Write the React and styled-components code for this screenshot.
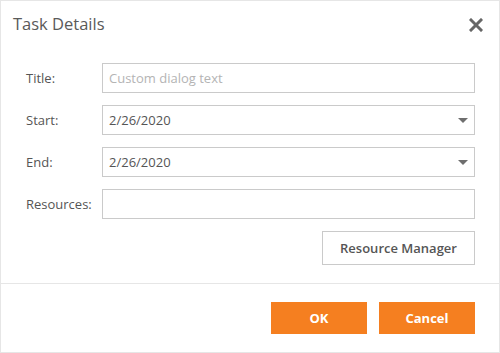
import React from "react";
import styled, { createGlobalStyle } from "styled-components";

const Global = createGlobalStyle`
  html, body { margin: 0; padding: 0; background: #fff; }
  body { font-family: "Open Sans", "Noto Sans", sans-serif; }
  * { box-sizing: border-box; }
`;

const Dialog = styled.div`
  width: 500px;
  height: 353px;
  border: 1px solid #e6e6e6;
  background: #fff;
  display: flex;
  flex-direction: column;
  color: #555;
`;

const Header = styled.div`
  height: 47px;
  display: flex;
  align-items: center;
  justify-content: space-between;
  padding: 0 16px 0 12px;
`;

const Title = styled.h1`
  margin: 0;
  font-size: 16.5px;
  font-weight: 400;
  color: #5a5a5a;
  line-height: 1;
`;

const CloseButton = styled.button`
  border: 0;
  background: transparent;
  padding: 0;
  width: 14px;
  height: 14px;
  display: flex;
  cursor: pointer;
`;

const Body = styled.div`
  flex: 1;
  padding: 15px 24px 18px 25px;
  display: flex;
  flex-direction: column;
  gap: 12px;
  border-bottom: 1px solid #e6e6e6;
`;

const Row = styled.div`
  display: flex;
  align-items: center;
`;

const Label = styled.label`
  width: 76px;
  font-size: 13px;
  color: #555;
`;

const Field = styled.div`
  flex: 1;
  height: 30px;
  border: 1px solid #cacaca;
  display: flex;
  align-items: center;
  padding: 0 6px;
  font-size: 13px;
  color: ${(p) => (p.$placeholder ? "#b4b4b4" : "#555")};
  position: relative;
`;

const Caret = styled.span`
  position: absolute;
  right: 6px;
  top: 12px;
  width: 0;
  height: 0;
  border-left: 5.5px solid transparent;
  border-right: 5.5px solid transparent;
  border-top: 5px solid #6e6e6e;
`;

const Actions = styled.div`
  display: flex;
  justify-content: flex-end;
`;

const OutlineButton = styled.button`
  height: 34px;
  width: 153px;
  border: 1px solid #cacaca;
  background: #fff;
  font-family: inherit;
  font-size: 13px;
  font-weight: 600;
  color: #555;
  padding: 0;
`;

const Footer = styled.div`
  height: 68px;
  display: flex;
  justify-content: flex-end;
  align-items: center;
  gap: 12px;
  padding: 0 24px 0 0;
`;

const PrimaryButton = styled.button`
  width: 96px;
  height: 32px;
  border: 0;
  background: #f57f20;
  color: #fff;
  font-family: inherit;
  font-size: 13px;
  font-weight: 700;
  padding: 0;
`;

export default function App() {
  return (
    <>
      <Global />
      <Dialog>
        <Header>
          <Title>Task Details</Title>
          <CloseButton aria-label="Close">
            <svg width="14" height="14" viewBox="0 0 14 14">
              <path d="M2 2 L12 12 M12 2 L2 12" stroke="#666" strokeWidth="3" strokeLinecap="square" />
            </svg>
          </CloseButton>
        </Header>
        <Body>
          <Row>
            <Label>Title:</Label>
            <Field $placeholder>Custom dialog text</Field>
          </Row>
          <Row>
            <Label>Start:</Label>
            <Field>2/26/2020<Caret /></Field>
          </Row>
          <Row>
            <Label>End:</Label>
            <Field>2/26/2020<Caret /></Field>
          </Row>
          <Row>
            <Label>Resources:</Label>
            <Field />
          </Row>
          <Actions>
            <OutlineButton>Resource Manager</OutlineButton>
          </Actions>
        </Body>
        <Footer>
          <PrimaryButton>OK</PrimaryButton>
          <PrimaryButton>Cancel</PrimaryButton>
        </Footer>
      </Dialog>
    </>
  );
}
